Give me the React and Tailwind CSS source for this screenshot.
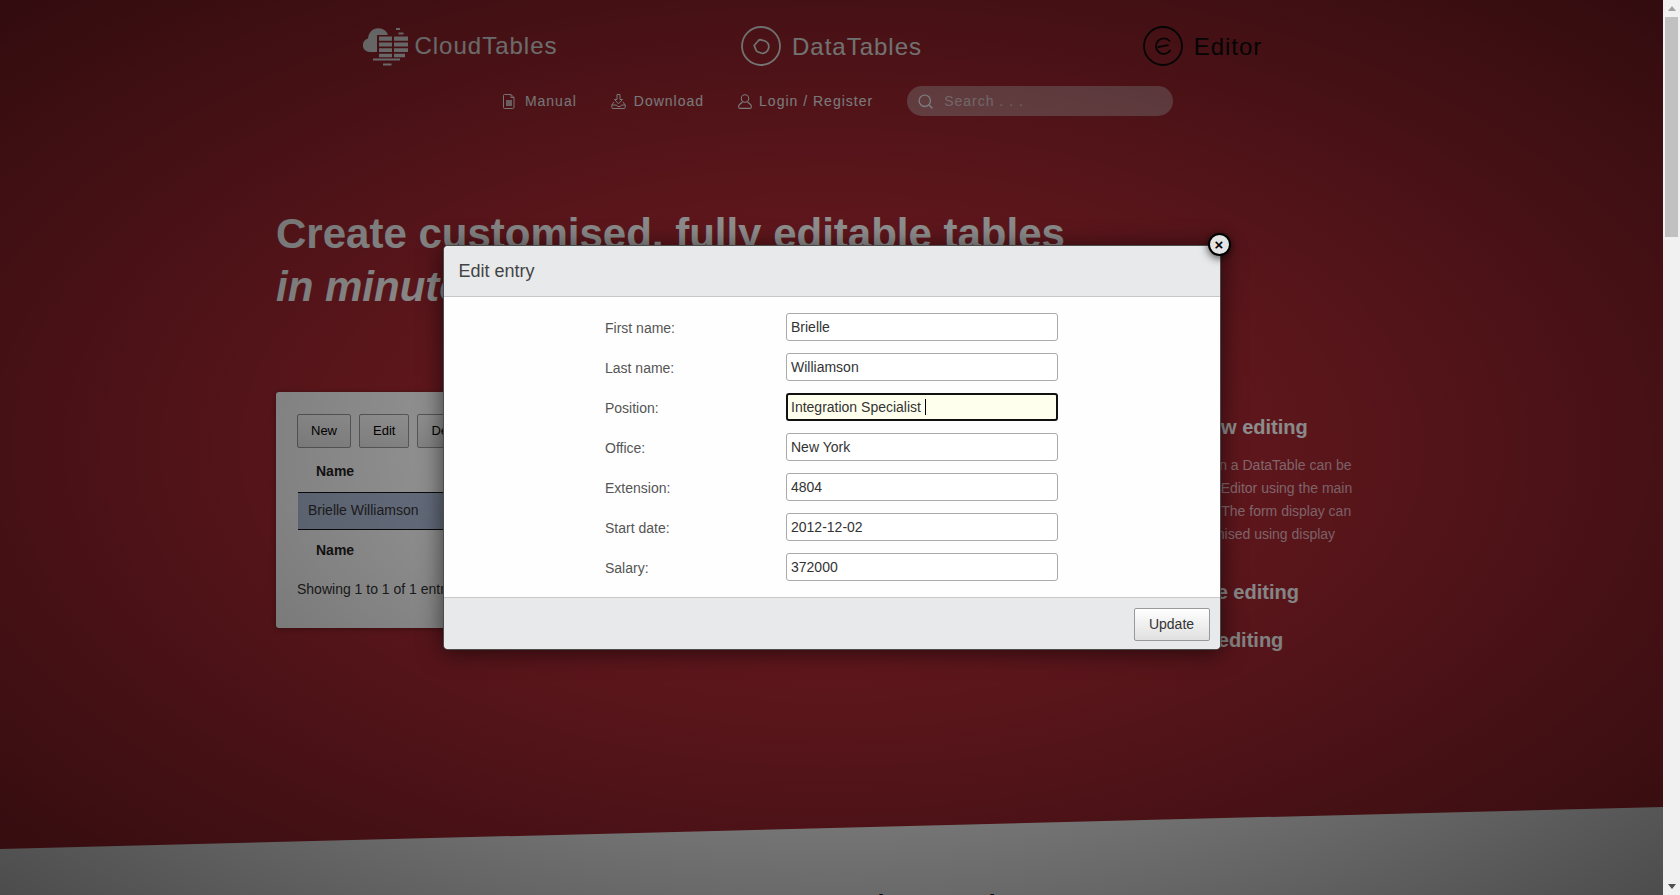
import React from 'react';
import { Search } from 'lucide-react';

const CloudLogo = () => (
  <svg width="46" height="42" viewBox="0 0 46 42" fill="white">
    <path d="M14 27H6.5A6.8 6.8 0 0 1 5 13.6 10.4 10.4 0 0 1 24.5 8.6V10H14Z" />
    <path d="M16 11.5h13v4.2H16zM31 11.5h14v4.2H31zM16 17.6h13v3.8H16zM31 17.6h14v3.8H31zM16 23.2h13v3.8H16zM31 23.2h14v3.8H31zM16 28.8h13v3.4H16zM31 28.8h11v3.4H31z" />
    <path d="M10 33.5h27v2H10zM20 38.5h8.500v2H20zM33 3h4v2h-4zM35.500 7.500h5v2h-5z" />
  </svg>
);

const DataTablesLogo = () => (
  <svg width="40" height="40" viewBox="0 0 40 40" fill="none" stroke="white" strokeWidth="1.800">
    <circle cx="20" cy="20" r="19" />
    <path d="M13.200 19.500 17.500 14.500Q18.500 13.500 20 13.800L24 15Q28 16.800 27.800 21 27.500 25.500 23 27.200 21.500 27.500 20 27L17 26Q15.500 25.500 15 24Z" />
  </svg>
);

const EditorLogo = () => (
  <svg width="40" height="40" viewBox="0 0 40 40" fill="none" stroke="#0a0a0a" strokeWidth="1.800">
    <circle cx="20" cy="20" r="19" />
    <path d="M26.500 14.800A7.800 7.800 0 1 0 27.200 24.500M15.500 21 25 19.200" strokeLinecap="round" />
  </svg>
);

const ManualIcon = () => (
  <svg width="12" height="15" viewBox="0 0 12 15" fill="none" stroke="white" strokeWidth="1">
    <path d="M1.500.5H8L11 3.500V13a1.500 1.500 0 0 1-1.500 1.500h-8A1 1 0 0 1 .5 13.500V1.500A1 1 0 0 1 1.500.5ZM8 .5v3h3" />
    <path d="M3 7h6M3 9h6M3 11h6" strokeWidth="1.400" />
  </svg>
);

const DownloadIcon = () => (
  <svg width="15" height="15" viewBox="0 0 15 15" fill="none" stroke="white" strokeWidth="1">
    <path d="M6 .5h3v5h2.500L7.500 9.800 3.500 5.500H6Z" />
    <path d="M3 8 .8 11v2.500a1 1 0 0 0 1 1h11.400a1 1 0 0 0 1-1V11L12 8M.8 11h4.700l1 1.500h3l1-1.500h3.700" />
  </svg>
);

const UserIcon = () => (
  <svg width="14" height="15" viewBox="0 0 14 15" fill="none" stroke="white" strokeWidth="1.100">
    <circle cx="7" cy="4.500" r="3.700" />
    <path d="M4.500 8 1.500 10.500Q.5 11.500.6 13 .8 14.400 2 14.400H12Q13.200 14.400 13.400 13 13.500 11.500 12.500 10.500L9.500 8" />
  </svg>
);

const fields = [
  { label: 'First name:', value: 'Brielle' },
  { label: 'Last name:', value: 'Williamson' },
  { label: 'Position:', value: 'Integration Specialist', focused: true },
  { label: 'Office:', value: 'New York' },
  { label: 'Extension:', value: '4804' },
  { label: 'Start date:', value: '2012-12-02' },
  { label: 'Salary:', value: '372000' },
];

const FormRow = ({ label, value, focused }) => (
  <div className="flex h-[40px] items-start">
    <label className="w-[181px] pt-[7px] text-[14px] leading-[16px] text-[#555]">{label}</label>
    <div className="relative">
      <input
        readOnly
        defaultValue={value}
        className={
          focused
            ? 'block h-[28px] w-[272px] rounded-[3px] border-2 border-[#111] bg-[#ffffee] px-[3px] text-[14px] text-[#333] outline-none'
            : 'block h-[28px] w-[272px] rounded-[3px] border border-[#aaa] bg-white px-[4px] text-[14px] text-[#333] outline-none'
        }
      />
      {focused && <span className="absolute left-[139px] top-[6px] h-[16px] w-px bg-black" />}
    </div>
  </div>
);

const EditModal = () => (
  <div className="relative w-[778px] rounded-[5px] border border-[rgba(0,0,0,0.7)] bg-[#fefefe] shadow-[0_2px_24px_rgba(0,0,0,0.6)]">
    <div className="flex h-[51px] items-center rounded-t-[5px] border-b border-[#c8c8c8] bg-[#e8e9eb] pl-[15px] text-[18px] text-[#444]">
      Edit entry
    </div>
    <div className="h-[300px] pt-[16px]">
      <div className="mx-auto w-[453px]">
        {fields.map((f) => (
          <FormRow key={f.label} {...f} />
        ))}
      </div>
    </div>
    <div className="flex h-[52px] items-start justify-end rounded-b-[5px] border-t border-[#c8c8c8] bg-[#e8e9eb] pr-[10px] pt-[10px]">
      <button className="h-[33px] w-[76px] rounded-[2px] border border-[#999] bg-gradient-to-b from-white to-[#e0e0e0] text-[14px] text-[#333]">
        Update
      </button>
    </div>
    <button className="absolute -right-[11px] -top-[13px] flex h-[23px] w-[23px] items-center justify-center rounded-full border-2 border-black bg-[#e4e4e4] text-[15px] font-bold leading-none text-black shadow-[0_2px_8px_rgba(0,0,0,0.7)]">
      ×
    </button>
  </div>
);

const TablePanel = () => (
  <div className="h-[236px] w-[854px] shrink-0 rounded-[3px] bg-white pl-[21px] pr-[20px] pt-[22px] shadow-[0_1px_6px_rgba(0,0,0,0.3)]">
    <div className="flex gap-[8px]">
      {['New', 'Edit', 'Delete'].map((b) => (
        <button
          key={b}
          className="h-[34px] rounded-[2px] border border-[#999] bg-gradient-to-b from-white to-[#e9e9e9] px-[13px] text-[13px] text-black"
        >
          {b}
        </button>
      ))}
    </div>
    <table className="ml-px w-[812px] border-collapse text-[14px] text-[#333]">
      <thead>
        <tr className="h-[44px]">
          <th className="pl-[18px] pt-[4px] text-left font-bold text-[#222]">Name</th>
          <th className="pl-[18px] pt-[4px] text-left font-bold text-[#222]">Position</th>
          <th className="pl-[18px] pt-[4px] text-left font-bold text-[#222]">Office</th>
          <th className="pl-[18px] pt-[4px] text-left font-bold text-[#222]">Salary</th>
        </tr>
      </thead>
      <tbody>
        <tr className="h-[37px] border-y border-[#111] bg-[#b0bed9]">
          <td className="pl-[10px]">Brielle Williamson</td>
          <td className="pl-[10px]">Integration Specialist</td>
          <td className="pl-[10px]">New York</td>
          <td className="pl-[10px]">$372,000</td>
        </tr>
      </tbody>
      <tfoot>
        <tr className="h-[42px]">
          <th className="pl-[18px] text-left font-bold text-[#222]">Name</th>
          <th className="pl-[18px] text-left font-bold text-[#222]">Position</th>
          <th className="pl-[18px] text-left font-bold text-[#222]">Office</th>
          <th className="pl-[18px] text-left font-bold text-[#222]">Salary</th>
        </tr>
      </tfoot>
    </table>
    <div className="pt-[8px] text-[14px] leading-[20px] text-[#333]">Showing 1 to 1 of 1 entries</div>
  </div>
);

const Sidebar = () => (
  <div className="ml-[30px] pt-[23px]">
    <h3 className="text-[20px] font-bold leading-[24px] text-white">Full row editing</h3>
    <p className="mt-[15px] whitespace-nowrap text-[14px] leading-[23px] text-[#e9b8c0]">
      All fields in a DataTable can be
      <br />
      edited by Editor using the main
      <br />
      interface. The form display can
      <br />
      be customised using display
    </p>
    <h3 className="mt-[34px] text-[20px] font-bold leading-[24px] text-white">Bubble editing</h3>
    <h3 className="mt-[24px] text-[20px] font-bold leading-[24px] text-white">Inline editing</h3>
  </div>
);

const Scrollbar = () => (
  <div className="flex h-full w-[17px] shrink-0 flex-col bg-[#f1f1f1]">
    <div className="flex h-[17px] items-center justify-center text-[#a3a3a3]">
      <svg width="8" height="5" viewBox="0 0 8 5" fill="currentColor">
        <path d="M4 0 8 5H0Z" />
      </svg>
    </div>
    <div className="mx-[2px] h-[220px] bg-[#c1c1c1]" />
    <div className="flex-1" />
    <div className="flex h-[17px] items-center justify-center text-[#505050]">
      <svg width="8" height="5" viewBox="0 0 8 5" fill="currentColor">
        <path d="M0 0H8L4 5Z" />
      </svg>
    </div>
  </div>
);

const App = () => {
  return (
    <div className="flex h-[895px] overflow-hidden font-['Liberation_Sans',Arial,sans-serif]">
      <div className="relative min-w-0 flex-1 overflow-hidden bg-[#a82832]">
        <div className="flex h-full flex-col">
          <header className="mx-auto grid w-[1113px] grid-cols-3 pt-[25px] text-[24px] leading-[40px] tracking-[1px]">
            <div className="flex items-start justify-center gap-[5px] text-white">
              <CloudLogo />
              <span className="pt-px">CloudTables</span>
            </div>
            <div className="flex items-center justify-center gap-[11px] text-white">
              <DataTablesLogo />
              <span className="pt-px">DataTables</span>
            </div>
            <div className="flex items-center justify-center gap-[11px] text-[#0a0a0a]">
              <EditorLogo />
              <span className="pt-px">Editor</span>
            </div>
          </header>

          <nav className="mt-[19px] flex h-[30px] items-center justify-center gap-[34px] pl-[13px] text-[14px] tracking-[1px] text-white">
            <a className="flex items-center gap-[10px]">
              <ManualIcon />
              Manual
            </a>
            <a className="flex items-center gap-[8px]">
              <DownloadIcon />
              Download
            </a>
            <a className="flex items-center gap-[7px]">
              <UserIcon />
              Login / Register
            </a>
            <div className="flex h-[30px] w-[266px] items-center gap-[10px] rounded-full bg-white/40 pl-[10px]">
              <Search size={17} strokeWidth={2} className="text-white" />
              <input
                readOnly
                placeholder="Search . . ."
                className="min-w-0 flex-1 bg-transparent text-[14px] tracking-[1px] outline-none placeholder:text-white/70"
              />
            </div>
          </nav>

          <main className="mx-auto w-[1111px] flex-1">
            <h1 className="mt-[91px] text-[42px] font-bold leading-[53px] text-white">
              Create customised, fully editable tables
              <br />
              <em>in minutes</em>
            </h1>
            <div className="mt-[79px] flex">
              <TablePanel />
              <Sidebar />
            </div>
          </main>

          <section className="h-[88px] bg-white pl-[763px] pt-[80px] [clip-path:polygon(0_42px,100%_0,100%_100%,0_100%)]">
            <h2 className="whitespace-nowrap text-[40px] leading-[46px] text-[#111]">Save the code</h2>
          </section>
        </div>

        <div className="absolute inset-0 flex items-center justify-center bg-[radial-gradient(ellipse_farthest-corner_at_center,rgba(0,0,0,0.3)_0%,rgba(0,0,0,0.7)_100%)]">
          <EditModal />
        </div>
      </div>
      <Scrollbar />
    </div>
  );
};

export default App;
